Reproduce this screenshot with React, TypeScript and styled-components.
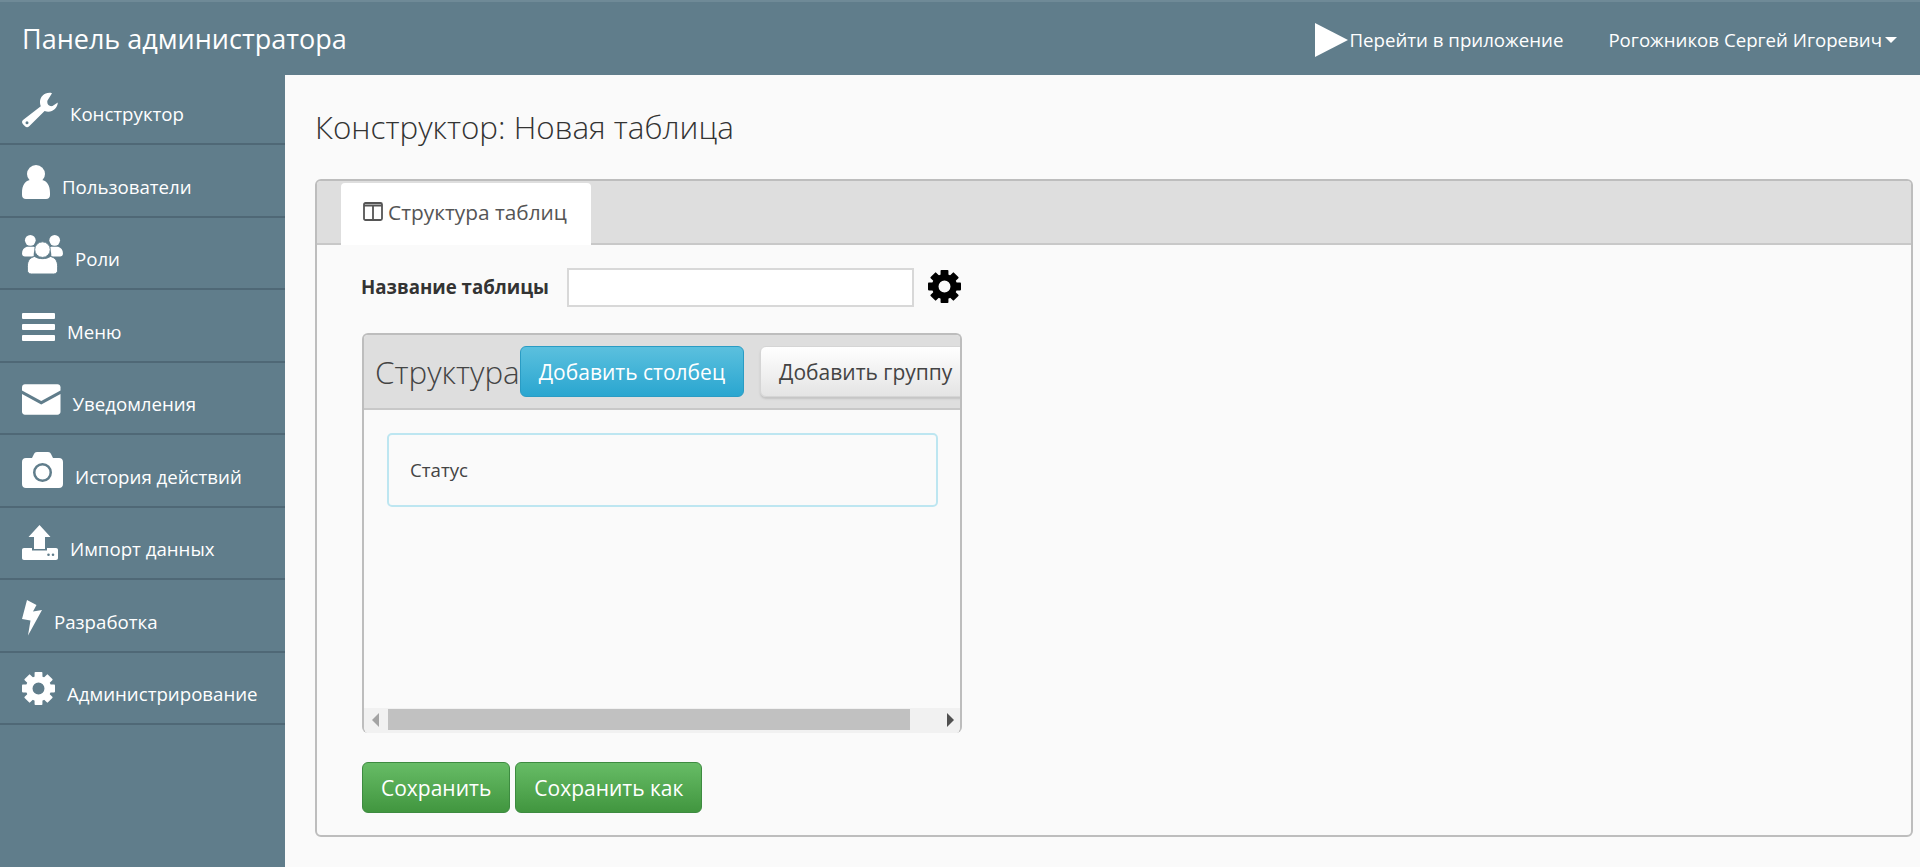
import React from 'react';
import styled, { createGlobalStyle } from 'styled-components';

const GlobalStyle = createGlobalStyle`
  html, body {
    margin: 0;
    height: 100%;
    overflow: hidden;
    background: #fafafa;
    font-family: 'Open Sans', 'Noto Sans', sans-serif;
    color: #333;
  }
  * { box-sizing: border-box; }
`;

const Page = styled.div`
  display: flex;
  flex-direction: column;
  height: 867px;
`;
const Header = styled.header`
  display: flex;
  align-items: center;
  height: 75px;
  padding: 0 23px 0 22px;
  flex: none;
  background: #607d8b;
  border-top: 2px solid #6f8a97;
  color: #fff;
`;
const Brand = styled.div`
  flex: 1;
  font-size: 27px;
  line-height: 73px;
`;
const HeaderLink = styled.a`
  display: flex;
  align-items: center;
  padding-top: 2px;
  font-size: 18.67px;
  margin-right: 45px;
`;
const UserLink = styled.a`
  display: flex;
  align-items: center;
  padding-top: 2px;
  font-size: 18.67px;
`;
const Caret = styled.span`
  width: 0;
  height: 0;
  margin-left: 3px;
  margin-top: 1px;
  border-left: 6px solid transparent;
  border-right: 6px solid transparent;
  border-top: 6px solid #fff;
`;
const Body = styled.div`
  display: flex;
  flex: 1;
  min-height: 0;
`;
const Sidebar = styled.nav`
  width: 285px;
  flex: none;
  background: #607d8b;
`;
const NavItem = styled.a`
  display: flex;
  align-items: flex-start;
  height: 72.5px;
  padding-left: 22px;
  border-bottom: 2px solid #4f6876;
  color: #fff;
  font-size: 18.67px;
  &:first-child {
    margin-top: -2.5px;
  }
`;
const NavIcon = styled.svg<{ $top: number }>`
  flex: none;
  fill: #fff;
  margin-top: ${({ $top }) => $top}px;
`;
const NavLabel = styled.span`
  margin-left: 12px;
  margin-top: 29.5px;
  line-height: 24px;
`;
const Main = styled.main`
  flex: 1;
  min-width: 0;
  padding: 29px 7px 0 30px;
`;
const Title = styled.h1`
  margin: 0 0 29px;
  font-size: 31.4px;
  line-height: 46px;
  font-weight: 300;
`;
const Panel = styled.section`
  height: 658px;
  border: 2px solid #bdbdbd;
  border-radius: 6px;
`;
const TabBar = styled.div`
  display: flex;
  align-items: flex-end;
  height: 64px;
  padding-left: 24px;
  background: #dedede;
  border-bottom: 2px solid #c8c8c8;
  border-radius: 4px 4px 0 0;
`;
const Tab = styled.div`
  display: flex;
  align-items: center;
  gap: 5px;
  height: 62px;
  margin-bottom: -2px;
  padding: 0 24px 5px 22px;
  background: #fff;
  border-radius: 4px 4px 0 0;
  font-size: 20.85px;
  color: #555;
`;
const PanelBody = styled.div`
  padding: 22px 45px 0;
`;
const FormRow = styled.div`
  display: flex;
  align-items: center;
  height: 38px;
`;
const FieldLabel = styled.label`
  font-size: 18.67px;
  font-weight: 700;
  width: 206px;
  margin-left: -1px;
`;
const TextField = styled.input`
  width: 347px;
  height: 39px;
  margin: 2px 14px 0 0;
  background: #fff;
  border: 2px solid #d8d8d8;
  outline: none;
`;
const Structure = styled.div`
  display: flex;
  flex-direction: column;
  width: 600px;
  height: 400px;
  margin-top: 28px;
  border: 2px solid #bdbdbd;
  border-bottom: 0;
  border-radius: 6px;
  overflow: hidden;
`;
const StructureHead = styled.div`
  display: flex;
  align-items: center;
  flex: none;
  height: 75px;
  padding-left: 11px;
  background: #dedede;
  border-bottom: 2px solid #c8c8c8;
  overflow: hidden;
  white-space: nowrap;
`;
const StructureTitle = styled.div`
  font-size: 31.4px;
  font-weight: 300;
  color: #444;
`;
const Button = styled.button<{ $variant: 'info' | 'plain' | 'success' }>`
  flex: none;
  height: 51px;
  padding: 0 18px;
  font-family: inherit;
  font-size: 21px;
  border-radius: 6px;
  border: 1px solid
    ${({ $variant }) =>
      $variant === 'info' ? '#2a9cc4' : $variant === 'success' ? '#3d8b40' : '#d5d5d5'};
  color: ${({ $variant }) => ($variant === 'plain' ? '#444' : '#fff')};
  background: ${({ $variant }) =>
    $variant === 'info'
      ? 'linear-gradient(#5bc0de, #2aa6d0)'
      : $variant === 'success'
        ? 'linear-gradient(#67bc66, #41963f)'
        : 'linear-gradient(#fff, #e4e4e4)'};
  box-shadow: ${({ $variant }) => ($variant === 'plain' ? '0 2px 2px #c4c4c4' : 'none')};
`;
const SecondButton = styled(Button)`
  margin-left: 16px;
`;
const StructureBody = styled.div`
  flex: 1;
  padding: 23px 22px 0 23px;
`;
const StatusCard = styled.div`
  display: flex;
  align-items: center;
  height: 74px;
  padding: 0 0 2px 21px;
  border: 2px solid #bde6f1;
  border-radius: 5px;
  font-size: 18.67px;
  color: #444;
`;
const Scrollbar = styled.div`
  display: flex;
  align-items: center;
  flex: none;
  height: 25px;
  margin: 0 -2px;
  padding-bottom: 2px;
  background: #f1f1f1;
`;
const ArrowCell = styled.div<{ $width: number }>`
  display: flex;
  align-items: center;
  justify-content: center;
  width: ${({ $width }) => $width}px;
  flex: none;
`;
const ArrowLeft = styled.span`
  border-top: 7px solid transparent;
  border-bottom: 7px solid transparent;
  border-right: 7px solid #a3a3a3;
`;
const ArrowRight = styled.span`
  border-top: 7px solid transparent;
  border-bottom: 7px solid transparent;
  border-left: 7px solid #505050;
`;
const Track = styled.div`
  display: flex;
  flex: 1;
  height: 21px;
`;
const Thumb = styled.div`
  width: 522px;
  height: 100%;
  background: #c1c1c1;
`;
const Actions = styled.div`
  display: flex;
  gap: 5px;
  margin-top: 29px;
`;

const Gear = ({ size, color, top }: { size: number; color: string; top: number }) => (
  <NavIcon $top={top} width={size} height={size} viewBox="0 0 32 32" style={{ fill: color }}>
    {[0, 45, 90, 135, 180, 225, 270, 315].map((a) => (
      <rect key={a} x="12.2" y="0" width="7.6" height="7" rx="0.8" transform={`rotate(${a} 16 16)`} />
    ))}
    <circle cx="16" cy="16" r="9" fill="none" stroke={color} strokeWidth="6.4" />
  </NavIcon>
);

const menu = [
  {
    label: 'Конструктор',
    icon: (
      <NavIcon $top={19} width="36" height="36" viewBox="0 0 36 36">
        <path
          fillRule="evenodd"
          d="M30 1.200C23.500-.5 17.500 4.500 18 11c.1 1.200.4 2.300.8 3.200L1 28c-1.300 1.200-1.300 3 0 4.200l2 2c1.300 1.300 3 1.200 4.200 0L22.600 19c6.800 2.500 13-2.300 13.200-8.500l-5.300 3.500c-3.500.8-6-2-5-5.500zM5 29.300a1.500 1.500 0 1 1 0 3 1.500 1.500 0 0 1 0-3z"
        />
      </NavIcon>
    ),
  },
  {
    label: 'Пользователи',
    icon: (
      <NavIcon $top={20} width="28" height="34" viewBox="0 0 28 34">
        <circle cx="14" cy="9" r="9" />
        <path d="M0 28c0-8 3-12 8-13 3.500 2.500 8.500 2.500 12 0 5 1 8 5 8 13v2c0 2.500-1.500 4-4 4H4c-2.500 0-4-1.500-4-4z" />
      </NavIcon>
    ),
  },
  {
    label: 'Роли',
    icon: (
      <NavIcon $top={17} width="41" height="39" viewBox="0 0 42 40">
        <circle cx="8.500" cy="5.500" r="5.500" />
        <circle cx="33.500" cy="5.500" r="5.500" />
        <path d="M0 19c0-4 2-6 5-7h7l3 1c-2 2-3 4-3 7v2H3c-2 0-3-1-3-3zM42 19c0-4-2-6-5-7h-7l-3 1c2 2 3 4 3 7v2h9c2 0 3-1 3-3z" />
        <path
          stroke="#607d8b"
          strokeWidth="1"
          d="M5.500 32c0-6 3-9 7.500-10 4 3 12 3 16 0 4.500 1 7.500 4 7.500 10v4c0 2.500-1.500 4-4 4H9.500c-2.500 0-4-1.500-4-4z"
        />
        <circle cx="21" cy="15" r="8" stroke="#607d8b" strokeWidth="1" />
      </NavIcon>
    ),
  },
  {
    label: 'Меню',
    icon: (
      <NavIcon $top={23} width="33" height="28" viewBox="0 0 33 28">
        <rect y="0" width="33" height="6" rx="1" />
        <rect y="11" width="33" height="6" rx="1" />
        <rect y="22" width="33" height="6" rx="1" />
      </NavIcon>
    ),
  },
  {
    label: 'Уведомления',
    icon: (
      <NavIcon $top={21} width="38.5" height="31" viewBox="0 0 39 31">
        <path d="M3 0h33c1.700 0 3 1.300 3 3v3.500L19.500 17 0 6.500V3c0-1.700 1.300-3 3-3z" />
        <path d="M0 10l19.500 10.500L39 10v18c0 1.700-1.300 3-3 3H3c-1.700 0-3-1.300-3-3z" />
      </NavIcon>
    ),
  },
  {
    label: 'История действий',
    icon: (
      <NavIcon $top={17} width="41" height="36" viewBox="0 0 41 36">
        <path
          fillRule="evenodd"
          d="M4 6h6l2-4c.5-1.200 1.500-2 3-2h11c1.500 0 2.500.8 3 2l2 4h6c2.500 0 4 1.500 4 4v22c0 2.500-1.500 4-4 4H4c-2.500 0-4-1.500-4-4V10c0-2.500 1.500-4 4-4zM20.500 11a9.500 9.500 0 1 0 0 19 9.500 9.500 0 0 0 0-19zm0 2.500a7 7 0 1 1 0 14 7 7 0 0 1 0-14z"
        />
      </NavIcon>
    ),
  },
  {
    label: 'Импорт данных',
    icon: (
      <NavIcon $top={17} width="36" height="35" viewBox="0 0 36 35">
        <path d="M17.500 0l11 12H23v12H12V12H6.500z" />
        <path
          fillRule="evenodd"
          d="M2 23h8v2.500h15V23h9c1.200 0 2 .8 2 2v8c0 1.200-.8 2-2 2H2c-1.200 0-2-.8-2-2v-8c0-1.200.8-2 2-2zM26.500 28.500a1.300 1.300 0 1 0 0 2.600 1.300 1.300 0 0 0 0-2.600zM31 28.500a1.300 1.300 0 1 0 0 2.600 1.300 1.300 0 0 0 0-2.600z"
        />
      </NavIcon>
    ),
  },
  {
    label: 'Разработка',
    icon: (
      <NavIcon $top={20} width="20" height="36" viewBox="0 0 20 36">
        <path d="M5 0l9.500 5-3.500 6.500L20 10 6 35.500 8.500 20.500 0 19z" />
      </NavIcon>
    ),
  },
  {
    label: 'Администрирование',
    icon: <Gear size={33} color="#fff" top={19} />,
  },
];

const App: React.FC = () => (
  <Page>
    <GlobalStyle />
    <Header>
      <Brand>Панель администратора</Brand>
      <HeaderLink>
        <svg width="34" height="34" viewBox="0 0 34 34" fill="#fff">
          <path d="M0 0l33 17L0 34z" />
        </svg>
        <span>Перейти в приложение</span>
      </HeaderLink>
      <UserLink>
        Рогожников Сергей Игоревич
        <Caret />
      </UserLink>
    </Header>
    <Body>
      <Sidebar>
        {menu.map((item) => (
          <NavItem key={item.label}>
            {item.icon}
            <NavLabel>{item.label}</NavLabel>
          </NavItem>
        ))}
      </Sidebar>
      <Main>
        <Title>Конструктор: Новая таблица</Title>
        <Panel>
          <TabBar>
            <Tab>
              <svg width="20" height="19" viewBox="0 0 20 19" fill="none" stroke="#555" strokeWidth="1.800">
                <rect x="1" y="1" width="18" height="17" rx="1.500" />
                <path d="M1 3.500h18M10 3.500V18" />
              </svg>
              Структура таблиц
            </Tab>
          </TabBar>
          <PanelBody>
            <FormRow>
              <FieldLabel>Название таблицы</FieldLabel>
              <TextField />
              <Gear size={33} color="#000" top={0} />
            </FormRow>
            <Structure>
              <StructureHead>
                <StructureTitle>Структура</StructureTitle>
                <Button $variant="info">Добавить столбец</Button>
                <SecondButton $variant="plain">Добавить группу</SecondButton>
              </StructureHead>
              <StructureBody>
                <StatusCard>Статус</StatusCard>
              </StructureBody>
              <Scrollbar>
                <ArrowCell $width={26}>
                  <ArrowLeft />
                </ArrowCell>
                <Track>
                  <Thumb />
                </Track>
                <ArrowCell $width={24}>
                  <ArrowRight />
                </ArrowCell>
              </Scrollbar>
            </Structure>
            <Actions>
              <Button $variant="success">Сохранить</Button>
              <Button $variant="success">Сохранить как</Button>
            </Actions>
          </PanelBody>
        </Panel>
      </Main>
    </Body>
  </Page>
);

export default App;
